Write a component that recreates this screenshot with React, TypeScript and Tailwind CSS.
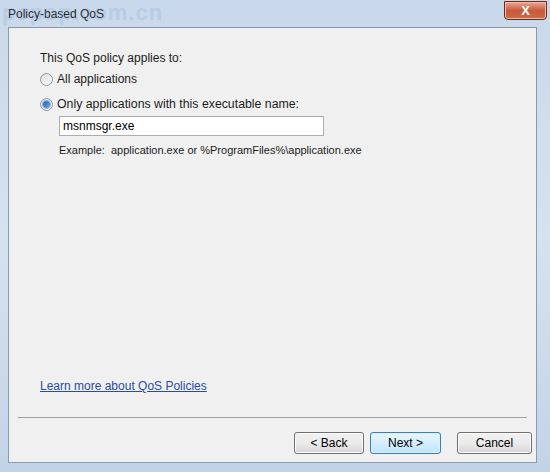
import React, { useState } from "react";

const ui = { fontFamily: '"Liberation Sans", Arial, sans-serif' };

function Radio({ checked }: { checked: boolean }) {
  return (
    <span className="relative inline-flex h-[13px] w-[13px] shrink-0 items-center justify-center rounded-full border border-[#8e9aa8] bg-gradient-to-br from-[#dcdcdc] to-[#fbfbfb]">
      {checked && (
        <span className="h-[7px] w-[7px] rounded-full bg-gradient-to-br from-[#2a5ea8] to-[#67a7e8] shadow-[0_0_0_1px_#8fb6de]" />
      )}
    </span>
  );
}

function WizButton({ label, focused = false }: { label: string; focused?: boolean }) {
  return (
    <button
      className={
        "h-[22px] rounded-[3px] text-[12px] text-black " +
        (focused
          ? "border border-[#3c7fb1] bg-gradient-to-b from-[#eaf6fd] to-[#bee6fd] shadow-[inset_0_0_0_1px_#d7eefb]"
          : "border border-[#707070] bg-gradient-to-b from-[#f2f2f2] via-[#ebebeb] to-[#d5d5d5] shadow-[inset_0_0_0_1px_#fcfcfc]")
      }
    >
      {label}
    </button>
  );
}

export default function App() {
  const [mode, setMode] = useState<"all" | "exe">("exe");
  const [exe, setExe] = useState("msnmsgr.exe");

  return (
    <div className="relative h-[472px] w-[550px] overflow-hidden bg-gradient-to-b from-[#c9d8ea] via-[#d6e2f0] to-[#c3d3e6]" style={ui}>
      {/* caption */}
      <div className="flex h-[27px] items-center justify-between pl-[8px] pr-[3px]">
        <span className="text-[12px] text-[#1e1e1e]">Policy-based QoS</span>
        <div className="-mt-[6px] flex h-[19px] w-[43px] items-center justify-center rounded-b-[4px] border border-[#6b2b1c] bg-gradient-to-b from-[#e8a894] via-[#c75a3c] to-[#cf6a44] text-[13px] font-bold text-white shadow-[inset_0_0_0_1px_#eebca9]">
          X
        </div>
      </div>

      <div className="flex h-[436px] pl-[8px] pr-[13px]">
        <div className="flex flex-1 flex-col border border-[#8a99ab] bg-[#f0f0f0] text-[12px] text-[#1c1c1c]">
          <div className="flex flex-1 flex-col px-[31px] pt-[22px]">
            <p className="leading-[16px]">This QoS policy applies to:</p>

            <label className="mt-[5px] flex items-center gap-[4px] leading-[16px]" onClick={() => setMode("all")}>
              <Radio checked={mode === "all"} />
              All applications
            </label>

            <label className="mt-[9px] flex items-center gap-[4px] text-[12.3px] leading-[16px]" onClick={() => setMode("exe")}>
              <Radio checked={mode === "exe"} />
              Only applications with this executable name:
            </label>

            <div className="ml-[19px] mt-[4px] flex flex-col">
              <input
                value={exe}
                onChange={e => setExe(e.target.value)}
                className="h-[20px] w-[265px] border border-[#abadb3] bg-white px-[3px] text-[12px] text-black outline-none"
              />
              <p className="mt-[6px] text-[11px] leading-[16px]">Example:&nbsp; application.exe or %ProgramFiles%\application.exe</p>
            </div>

            <div className="flex-1" />

            <a className="mb-[23px] w-fit text-[12px] leading-[16px] text-[#2a4d9a] underline">Learn more about QoS Policies</a>
          </div>

          <div className="mx-[9px] h-[2px] border-t border-[#a0a0a0] border-b-white" />

          <div className="flex justify-end gap-[6px] pb-[8px] pr-[4px] pt-[13px]">
            <div className="grid w-[70px]"><WizButton label="< Back" /></div>
            <div className="grid w-[71px]"><WizButton label="Next >" focused /></div>
            <div className="ml-[10px] grid w-[75px]"><WizButton label="Cancel" /></div>
          </div>
        </div>
      </div>

      {/* site watermark over the caption */}
      <span className="pointer-events-none absolute left-[2px] top-[1px] text-[22px] font-bold leading-[24px] tracking-[1px] text-[#6f9ed8] opacity-20">
        pcpop.com.cn
      </span>
    </div>
  );
}
